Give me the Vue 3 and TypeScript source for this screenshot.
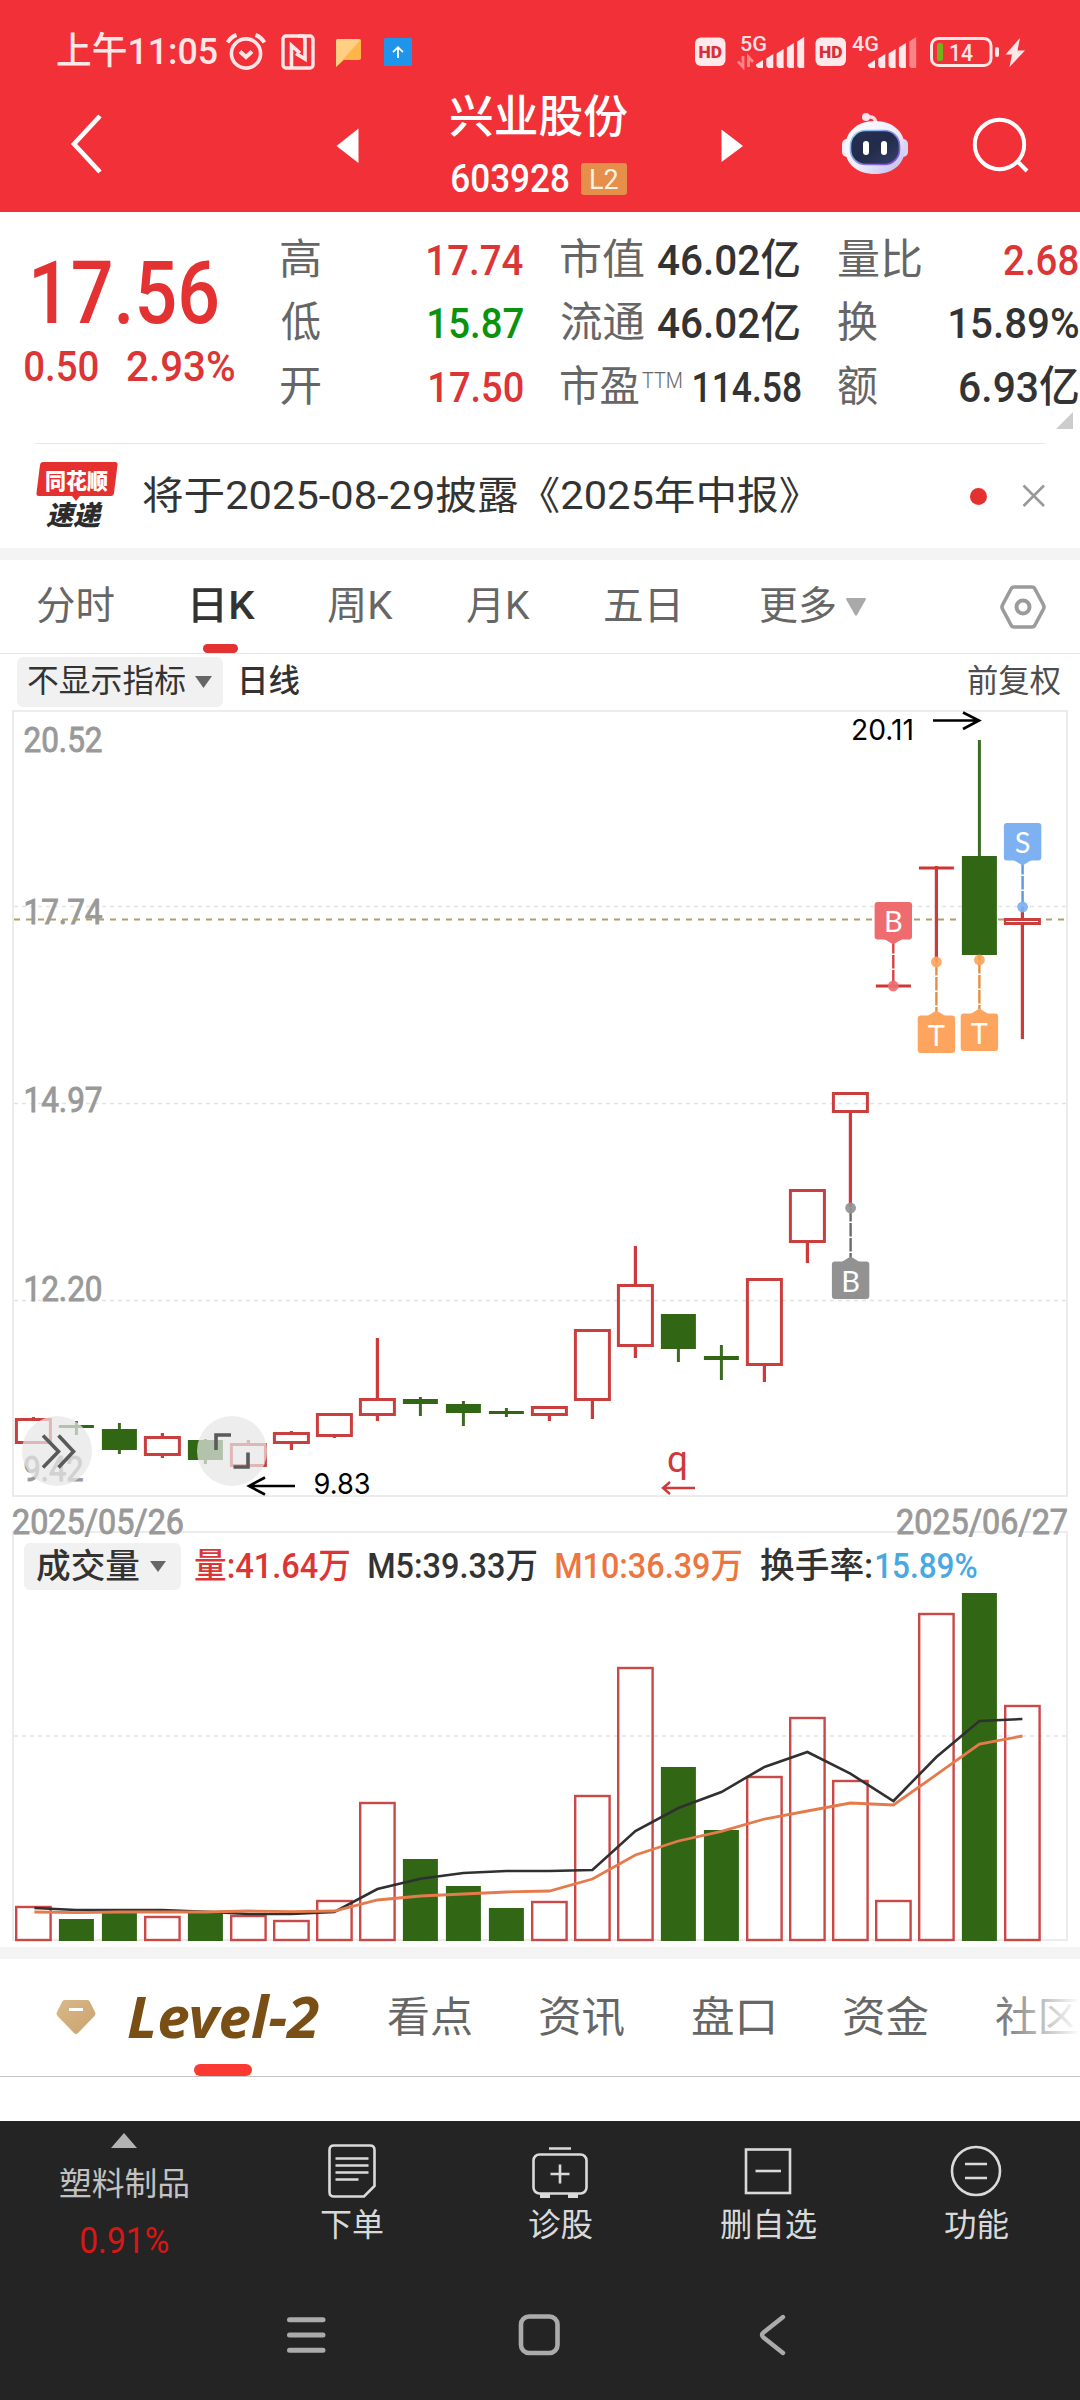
<script setup lang="ts">
import type { Directive } from 'vue'

/* Condenses or widens a line of text so that its visible ink spans the given width. */
const vFit: Directive<HTMLElement, number> = {
  mounted(el, { value }) {
    const cs = getComputedStyle(el)
    const ctx = document.createElement('canvas').getContext('2d')
    if (!ctx) return
    ctx.font = `${cs.fontStyle} ${cs.fontWeight} ${cs.fontSize} ${cs.fontFamily}`
    const m = ctx.measureText((el.textContent ?? '').trim())
    const ink = m.actualBoundingBoxRight + m.actualBoundingBoxLeft
    const s = value / ink
    el.style.width = `${value}px`
    el.style.transform = `translateX(${m.actualBoundingBoxLeft * s}px) scaleX(${s})`
  },
}

interface Candle {
  up: boolean
  top: number
  bottom: number
  high: number
  low: number
  vol: number
  m5: number
  m10: number
}

const raw: [number, number, number, number, number, number, number, number][] = [
  [1, 1418, 1444, 1417, 1444, 1906, 1908, 1912],
  [0, 1425, 1428, 1421, 1435, 1919, 1910, 1912.7],
  [0, 1429, 1450, 1423, 1454, 1913, 1910, 1912],
  [1, 1436, 1456, 1433, 1458, 1916, 1910, 1912],
  [0, 1440, 1460, 1439, 1464, 1913, 1911.7, 1912],
  [1, 1443, 1467, 1440, 1467, 1915, 1914, 1911],
  [1, 1432, 1444, 1431, 1450, 1920, 1914, 1911.7],
  [1, 1413, 1437, 1413, 1438, 1900, 1912, 1911],
  [1, 1398, 1416, 1338, 1421, 1802, 1889, 1900],
  [0, 1399, 1404, 1397, 1416, 1859, 1878.7, 1896],
  [0, 1404, 1413, 1401, 1426, 1886, 1873, 1894],
  [0, 1411, 1414, 1408, 1417, 1908, 1871, 1892],
  [1, 1406, 1416, 1406, 1421, 1901, 1871, 1891],
  [1, 1329, 1401, 1329, 1419, 1795, 1870, 1879],
  [1, 1284, 1347, 1246, 1358, 1667, 1831, 1855],
  [0, 1314, 1349, 1314, 1362, 1767, 1808, 1841],
  [0, 1356, 1360, 1345, 1380, 1830, 1792, 1831.3],
  [1, 1278, 1366, 1278, 1382, 1776, 1767, 1819],
  [1, 1189, 1243, 1189, 1263, 1717, 1752, 1811],
  [1, 1092, 1113, 1092, 1207, 1780, 1773.7, 1803],
  [1, 984, 988, 984, 988, 1900, 1801, 1805],
  [1, 866, 870, 866, 962, 1613, 1757, 1774.7],
  [0, 856, 955, 740, 960, 1593, 1721, 1744],
  [1, 918, 925, 907, 1039, 1705, 1719, 1736],
]
const candles: Candle[] = raw.map(([u, top, bottom, high, low, vol, m5, m10]) => ({
  up: u === 1, top, bottom, high, low, vol, m5, m10,
}))
const cx = (i: number) => 33.4 + i * 43
const line = (key: 'm5' | 'm10') => candles.map((c, i) => `${cx(i) + (i === 0 ? 1 : 0)},${c[key]}`).join(' ')

const marks = [
  { x: 893.3, dot: 986, box: 902, below: false, label: 'B', color: '#ee6c6d', stem: '#d84242' },
  { x: 936.4, dot: 962, box: 1015.5, below: true, label: 'T', color: '#fda55e', stem: '#e58f3e' },
  { x: 979.4, dot: 960, box: 1013.5, below: true, label: 'T', color: '#fda55e', stem: '#e58f3e' },
  { x: 1022.6, dot: 907, box: 823, below: false, label: 'S', color: '#7db1f1', stem: '#5b96de' },
  { x: 850.6, dot: 1208, box: 1261.5, below: true, label: 'B', color: '#929292', stem: '#6b6b6b' },
]
const axis = [
  { t: '20.52', y: 752, w: 79 },
  { t: '17.74', y: 924, w: 79 },
  { t: '14.97', y: 1112, w: 79 },
  { t: '12.20', y: 1301, w: 79 },
  { t: '9.42', y: 1481, w: 60 },
]
const signal = [60, 54, 49, 43, 37]
</script>

<template>
  <div class="screen">
    <header class="head">
      <div class="status">
        <span v-fit="160" class="clock">上午11:05</span>
        <svg class="i-alarm" width="40" height="38" viewBox="0 0 40 38" fill="none" stroke="#ffe6e7" stroke-width="3.6">
          <circle cx="20" cy="20.500" r="14.600" />
          <path d="M1.500 9.500Q5 4 10.500 2M38.500 9.500Q35 4 29.500 2" stroke-width="4" />
          <path d="M14 18.500L20 24L26 18.500" stroke-width="4" />
        </svg>
        <svg class="i-nfc" width="34" height="36" viewBox="0 0 34 36" fill="none" stroke="#ffe6e7" stroke-width="3.4">
          <rect x="2" y="2" width="30" height="32" rx="3" />
          <path d="M10.500 33V11.500L19 19M17 2H21Q24 2 24 6V25L15 19.500" stroke-width="3.600" />
        </svg>
        <svg class="i-msg" width="26" height="30" viewBox="0 0 26 30">
          <path d="M2 1H23Q25 1 25 3V20Q25 22 23 22H8L0 29V3Q0 1 2 1Z" fill="#ffb548" />
          <path d="M2 1H23L24.500 2L0 29V3Q0 1 2 1Z" fill="#ffcf84" />
        </svg>
        <svg class="i-up" width="28" height="28" viewBox="0 0 28 28">
          <rect width="28" height="28" rx="1.500" fill="#1e95ea" />
          <path d="M14 20V9.500M9 14.200L14 9.200L19 14.200" fill="none" stroke="#fff" stroke-width="1.800" />
        </svg>
        <svg class="sys" width="334" height="54" viewBox="692 20 334 54">
          <g v-for="x in [695, 815.5]" :key="x">
            <rect :x="x" y="37.500" width="30.500" height="28.500" rx="6" fill="#ffe9ea" />
            <text :x="x + 3.500" y="57.500" class="hd" textLength="23.500" lengthAdjust="spacingAndGlyphs">HD</text>
          </g>
          <text x="740" y="50.500" class="net" textLength="27" lengthAdjust="spacingAndGlyphs">5G</text>
          <text x="852" y="50.500" class="net" textLength="27" lengthAdjust="spacingAndGlyphs">4G</text>
          <path d="M743 56V67L738 61.500M748.500 67V57L753 62" fill="none" stroke="#f98589" stroke-width="2.800" />
          <path v-for="(y, i) in signal" :key="'a' + i" :d="`M${756 + i * 10.300} 66V${y + 4.500}L${763 + i * 10.300} ${y}V68H${758 + i * 10.300}Z`" fill="#ffe9ea" />
          <path v-for="(y, i) in signal" :key="'b' + i" :d="`M${868 + i * 10.300} 66V${y + 4.500}L${875 + i * 10.300} ${y}V68H${870 + i * 10.300}Z`" :fill="i === 4 ? '#f98488' : '#ffe9ea'" />
          <rect x="931.500" y="38.500" width="59.500" height="27" rx="7" fill="none" stroke="#ffe6e7" stroke-width="3" />
          <rect x="937" y="43" width="6" height="18" rx="2" fill="#74b21d" />
          <text x="949" y="61" class="bat" textLength="24" lengthAdjust="spacingAndGlyphs">14</text>
          <rect x="995" y="47" width="4" height="10" rx="2" fill="#ffe6e7" />
          <path d="M1020 38L1005.500 54.500H1012L1009.500 67L1025 50.500H1017.500Z" fill="#ffe6e7" />
        </svg>
      </div>
      <div class="title">
        <svg class="i-back" width="34" height="62" viewBox="0 0 34 62"><path d="M31 3L5 31L31 59" fill="none" stroke="#fff" stroke-width="4.600" /></svg>
        <svg class="i-prev" width="23" height="36" viewBox="0 0 23 36"><path d="M22.500 0.500V35L0.500 18Z" fill="#fff" /></svg>
        <div class="name">
          <b v-fit="178">兴业股份</b>
          <div class="code">
            <span v-fit="117" class="num">603928</span>
            <em><span v-fit="27">L2</span></em>
          </div>
        </div>
        <svg class="i-next" width="23" height="34" viewBox="0 0 23 34"><path d="M0.500 0.500V33L22 17Z" fill="#fff" /></svg>
        <svg class="i-bot" width="68" height="64" viewBox="841 112 68 64">
          <defs>
            <linearGradient id="shell" x1="0" y1="0" x2="1" y2="1">
              <stop offset="0" stop-color="#fff" /><stop offset=".55" stop-color="#f0ecfb" /><stop offset="1" stop-color="#b8b5ea" />
            </linearGradient>
            <linearGradient id="visor" x1="0" y1="0" x2="1" y2="1">
              <stop offset="0" stop-color="#272f55" /><stop offset=".5" stop-color="#222b49" /><stop offset="1" stop-color="#37406a" />
            </linearGradient>
            <linearGradient id="rim" x1="0" y1="0" x2="1" y2="1">
              <stop offset="0" stop-color="#8ed9ec" /><stop offset="1" stop-color="#7a41dc" />
            </linearGradient>
          </defs>
          <path d="M867 117.500Q875.500 115 876 124" fill="none" stroke="#f6dbea" stroke-width="3.400" />
          <circle cx="866" cy="117" r="4" fill="#fbe3ee" />
          <rect x="842" y="139" width="12" height="18" rx="5" fill="#efeafd" />
          <rect x="896" y="139" width="12" height="18" rx="5" fill="#d8d4f8" />
          <path d="M875 121C894 121 905 133 905 148C905 164 893 174 875 174C857 174 845 164 845 148C845 133 856 121 875 121Z" fill="url(#shell)" />
          <rect x="850.500" y="130.500" width="49" height="34" rx="15" fill="url(#visor)" stroke="url(#rim)" stroke-width="1.600" />
          <rect x="863" y="141" width="6" height="14" rx="3" fill="#fff" /><rect x="881" y="141" width="6" height="14" rx="3" fill="#fff" />
        </svg>
        <svg class="i-search" width="58" height="58" viewBox="971 116 58 58" fill="none" stroke="#fff" stroke-width="4">
          <circle cx="999.500" cy="144.500" r="24.700" /><path d="M1016.500 160.500L1027 171" />
        </svg>
      </div>
    </header>

    <section class="quote">
      <div class="last">
        <strong v-fit="183" class="num">17.56</strong>
        <div class="chg"><span v-fit="73" class="num">0.50</span><span v-fit="107" class="num">2.93%</span></div>
      </div>
      <div class="col c1">
        <div><label v-fit="39">高</label><span v-fit="95" class="num red">17.74</span></div>
        <div><label v-fit="39">低</label><span v-fit="94" class="num green">15.87</span></div>
        <div><label v-fit="39">开</label><span v-fit="93" class="num red">17.50</span></div>
      </div>
      <div class="col c2">
        <div><label v-fit="83">市值</label><span v-fit="141" class="num">46.02亿</span></div>
        <div><label v-fit="83">流通</label><span v-fit="141" class="num">46.02亿</span></div>
        <div class="pe"><label v-fit="78">市盈</label><sup v-fit="40">TTM</sup><span v-fit="107" class="num">114.58</span></div>
      </div>
      <div class="col c3">
        <div><label v-fit="83">量比</label><span v-fit="74" class="num red">2.68</span></div>
        <div><label v-fit="39">换</label><span v-fit="128" class="num">15.89%</span></div>
        <div><label v-fit="39">额</label><span v-fit="118" class="num">6.93亿</span></div>
      </div>
      <i class="more-corner"></i>
    </section>

    <section class="notice">
      <div class="flag">
        <svg class="flag-bg" width="82" height="68" viewBox="0 0 82 68"><path d="M7 0H79Q82 0 81.500 3L78 31Q77.500 34 75 34H44L40 39L36 34H3Q0 34 0.500 31L4 3Q4.500 0 7 0Z" fill="#e62f2f" /></svg>
        <span v-fit="62" class="f1">同花顺</span>
        <span v-fit="57" class="f2">速递</span>
      </div>
      <span v-fit="656" class="msg">将于2025-08-29披露《2025年中报》</span>
      <i class="dot"></i>
      <svg width="24" height="24" viewBox="0 0 24 24"><path d="M1.500 1.500L22 22M22 1.500L1.500 22" stroke="#999" stroke-width="2.600" /></svg>
    </section>

    <nav class="tabs">
      <span v-fit="77">分时</span>
      <span v-fit="62" class="on t2">日K</span>
      <span v-fit="65" class="t3">周K</span>
      <span v-fit="63" class="t4">月K</span>
      <span v-fit="73" class="t5">五日</span>
      <span v-fit="75" class="t6">更多</span>
      <svg class="tri" width="20" height="18" viewBox="0 0 20 18"><path d="M1 0H19Q20.500 0 19.500 2L11 17Q10 18.500 9 17L0.500 2Q-0.500 0 1 0Z" fill="#a9a9a9" /></svg>
      <svg class="gear" width="46" height="44" viewBox="0 0 46 44" fill="none" stroke="#9b9b9b">
        <path d="M14 2H32Q34 2 35 4L43.500 20Q44.500 22 43.500 24L35 40Q34 42 32 42H14Q12 42 11 40L2.500 24Q1.500 22 2.500 20L11 4Q12 2 14 2Z" stroke-width="3.600" />
        <circle cx="23" cy="22" r="6.500" stroke-width="4" />
      </svg>
      <i class="bar"></i>
    </nav>

    <div class="indicator">
      <div class="chip">
        <span v-fit="157">不显示指标</span>
        <svg width="17" height="12" viewBox="0 0 17 12"><path d="M0 0H17L8.500 12Z" fill="#666" /></svg>
      </div>
      <b v-fit="57">日线</b>
      <span v-fit="92" class="fq">前复权</span>
    </div>

    <section class="chart">
      <svg class="plot" width="1080" height="1237" viewBox="0 710 1080 1237">
        <g fill="none" stroke="#ececec" stroke-width="2">
          <rect x="13" y="711" width="1054" height="785" />
          <rect x="13" y="1532" width="1054" height="408" />
        </g>
        <g stroke="#e3e3e3" stroke-width="1.300" stroke-dasharray="4 4">
          <path d="M14 906.500H1066M14 1103.500H1066M14 1300.500H1066" /><path d="M14 1736H1066" />
        </g>
        <text v-for="a in axis" :key="a.t" x="23.500" :y="a.y" class="axis" :textLength="a.w" lengthAdjust="spacingAndGlyphs">{{ a.t }}</text>
        <path d="M14 919.500H1066" stroke="#b0a06c" stroke-width="1.800" stroke-dasharray="6 6" />

        <g v-for="(c, i) in candles" :key="i">
          <template v-if="c.up">
            <path :d="`M${cx(i)} ${c.high}V${c.top + 1}M${cx(i)} ${c.bottom - 1}V${c.low}`" stroke="#cf3939" stroke-width="3.2" />
            <rect v-if="c.bottom - c.top > 4" :x="cx(i) - 17" :y="c.top + 1.500" width="34" :height="c.bottom - c.top - 3" fill="none" stroke="#cb3e3e" stroke-width="3" />
            <rect v-else :x="cx(i) - 17.500" :y="c.top + 0.500" width="35" height="3" fill="#cf3535" />
            <rect :x="cx(i) - 17.200" :y="c.vol + 1" width="34.400" :height="1941 - c.vol - 2" fill="none" stroke="#cb4848" stroke-width="2.400" />
          </template>
          <template v-else>
            <path :d="`M${cx(i)} ${c.high}V${c.low}`" stroke="#3b6b22" stroke-width="3" />
            <rect :x="cx(i) - 17.500" :y="c.top" width="35" :height="c.bottom - c.top" fill="#316714" />
            <rect :x="cx(i) - 17.500" :y="c.vol" width="35" :height="1941 - c.vol" fill="#316714" />
          </template>
        </g>
        <polyline :points="line('m5')" fill="none" stroke="#303030" stroke-width="2.600" />
        <polyline :points="line('m10')" fill="none" stroke="#e57b4c" stroke-width="2.800" />

        <g v-for="(m, i) in marks" :key="'m' + i">
          <path :d="m.below ? `M${m.x} ${m.dot}V${m.box}` : `M${m.x} ${m.box + 38}V${m.dot}`" :stroke="m.stem" stroke-width="2.400" stroke-dasharray="13.500 1.500" />
          <circle :cx="m.x" :cy="m.dot" r="5.400" :fill="m.color" fill-opacity=".92" />
          <path :d="m.below ? `M${m.x - 9} ${m.box + 0.500}L${m.x} ${m.box - 5}L${m.x + 9} ${m.box + 0.500}Z` : `M${m.x - 9} ${m.box + 37}L${m.x} ${m.box + 42.500}L${m.x + 9} ${m.box + 37}Z`" :fill="m.color" />
          <rect :x="m.x - 18.700" :y="m.box" width="37.400" height="37.500" rx="3" :fill="m.color" />
          <text :x="m.x" :y="m.box + 30" class="mk">{{ m.label }}</text>
        </g>

        <text x="851" y="740" class="ext" textLength="63" lengthAdjust="spacingAndGlyphs">20.11</text>
        <path d="M933 720.500H979M963 712.500L979 720.500L963 729" fill="none" stroke="#000" stroke-width="2.600" />
        <text x="313.500" y="1494" class="ext" textLength="57" lengthAdjust="spacingAndGlyphs">9.83</text>
        <path d="M295 1486H249M265 1477.500L249 1486L265 1494.500" fill="none" stroke="#000" stroke-width="2.600" />
        <text x="677.500" y="1472" class="q">q</text>
        <path d="M695 1488H663M670 1482L663 1488L670 1494" fill="none" stroke="#cf3939" stroke-width="2.400" />

        <g fill="#e6e6e6" fill-opacity=".72"><circle cx="57" cy="1451" r="35" /><circle cx="232" cy="1451" r="35" /></g>
        <g fill="none" stroke="#5a5a5a" stroke-width="3.600">
          <path d="M43 1435.500L58.500 1451.500L43 1467.500M58.500 1435.500L73.500 1451.500L58.500 1467.500" />
          <path d="M216 1450V1435H231M248 1452.500V1467H233.500" />
        </g>

        <text x="12" y="1534" class="axis" textLength="172" lengthAdjust="spacingAndGlyphs">2025/05/26</text>
        <text x="896" y="1534" class="axis" textLength="172" lengthAdjust="spacingAndGlyphs">2025/06/27</text>
      </svg>
      <div class="legend">
        <div class="chip">
          <span v-fit="102">成交量</span>
          <svg width="16" height="11" viewBox="0 0 16 11"><path d="M0 0H16L8 11Z" fill="#666" /></svg>
        </div>
        <span v-fit="154" class="l1">量:41.64万</span>
        <span v-fit="167" class="l2">M5:39.33万</span>
        <span v-fit="185" class="l3">M10:36.39万</span>
        <span v-fit="110" class="l4">换手率:</span>
        <span v-fit="101" class="l5">15.89%</span>
      </div>
    </section>

    <nav class="sub">
      <svg class="gem" width="40" height="36" viewBox="0 0 40 36">
        <defs><linearGradient id="gold" x1="0" y1="0" x2="1" y2="1"><stop offset="0" stop-color="#dab88b" /><stop offset="1" stop-color="#c8a36b" /></linearGradient></defs>
        <path d="M9 0H31Q33 0 34 2L39 12Q40 14 38.500 16L22 33Q20 35 18 33L1.500 16Q0 14 1 12L6 2Q7 0 9 0Z" fill="url(#gold)" />
        <rect x="13" y="8" width="14" height="3" fill="#fff" />
      </svg>
      <strong v-fit="191">Level-2</strong>
      <span v-fit="83" class="s1">看点</span>
      <span v-fit="84" class="s2">资讯</span>
      <span v-fit="81" class="s3">盘口</span>
      <span v-fit="84" class="s4">资金</span>
      <span v-fit="82" class="s5">社区</span>
      <i class="fade"></i>
      <i class="bar"></i>
    </nav>

    <footer class="dock">
      <div class="acts">
        <div class="sector">
          <svg width="26" height="15" viewBox="0 0 26 15"><path d="M13 0L26 15H0Z" fill="#b3b3b3" /></svg>
          <span v-fit="128">塑料制品</span>
          <em v-fit="87">0.91%</em>
        </div>
        <div class="act a1">
          <svg width="58" height="58" viewBox="323 2142 58 58" fill="none" stroke="#dadada" stroke-width="2.600">
            <path d="M334 2145.500H370Q374.500 2145.500 374.500 2150V2186L364 2196.500H334Q329.500 2196.500 329.500 2192V2150Q329.500 2145.500 334 2145.500Z" />
            <path d="M335.500 2158.500H368.500M335.500 2165.500H368.500M335.500 2172.500H368.500M335.500 2179.500H358.500" />
          </svg>
          <span v-fit="62">下单</span>
        </div>
        <div class="act a2">
          <svg width="58" height="58" viewBox="531 2142 58 58" fill="none" stroke="#dadada" stroke-width="2.600">
            <rect x="533.500" y="2154.500" width="53" height="39" rx="6" />
            <path d="M549 2148.500H571M560 2164.500V2183.500M550.500 2174H569.500" /><path d="M540 2196H550M568 2196H578" stroke-width="4" />
          </svg>
          <span v-fit="63">诊股</span>
        </div>
        <div class="act a3">
          <svg width="58" height="58" viewBox="739 2142 58 58" fill="none" stroke="#dadada" stroke-width="2.600">
            <rect x="746" y="2149.500" width="44" height="43.500" /><path d="M755.500 2171H781" />
          </svg>
          <span v-fit="95">删自选</span>
        </div>
        <div class="act a4">
          <svg width="58" height="58" viewBox="947 2142 58 58" fill="none" stroke="#dadada" stroke-width="2.600">
            <circle cx="976" cy="2171" r="24" /><path d="M965 2164H987M965 2178H987" />
          </svg>
          <span v-fit="63">功能</span>
        </div>
      </div>
      <div class="keys">
        <svg class="k1" width="40" height="44" viewBox="286 2313 40 44" stroke="#ababab" stroke-width="5" stroke-linecap="round"><path d="M289.500 2319.700H323M289.500 2335H323M289.500 2350.300H323" /></svg>
        <svg class="k2" width="44" height="44" viewBox="517 2313 44 44" fill="none" stroke="#ababab" stroke-width="4.600"><rect x="521" y="2316.500" width="36.500" height="36.500" rx="8" /></svg>
        <svg class="k3" width="28" height="44" viewBox="759 2313 28 44" fill="none" stroke="#ababab" stroke-width="4.400" stroke-linecap="round"><path d="M783 2317L763.500 2332.500Q760.500 2335 763.500 2337.500L783 2353" /></svg>
      </div>
    </footer>
  </div>
</template>

<style>
body {
  margin: 0;
  background: #fff;
}
</style>

<style scoped>
.screen {
  width: 1080px;
  height: 2400px;
  overflow: hidden;
  background: #fff;
  color: #333;
  font-family: Roboto, 'Noto Sans CJK SC', sans-serif;
  display: flex;
  flex-direction: column;
}
svg { display: block; flex: none; }
span, b, strong, label, em, sup {
  display: block;
  flex: none;
  white-space: nowrap;
  transform-origin: 0 50%;
  font-style: normal;
}
.num { font-family: Roboto, 'Noto Sans CJK SC', sans-serif; font-weight: 500; }
.red { color: #dc3535; }
.green { color: #0a930d; }

.head { height: 212px; flex: none; background: #f13038; color: #fff; }
.status { height: 78px; display: flex; padding-left: 57px; }
.clock { font-size: 37px; line-height: 52px; margin-top: 26px; color: #ffe6e7; font-weight: 500; }
.i-alarm { margin: 33px 0 0 9px; }
.i-nfc { margin: 34px 0 0 15px; }
.i-msg { margin: 38px 0 0 21px; }
.i-up { margin: 38px 0 0 22px; }
.sys { margin: 20px 0 0 280px; }
.hd { font: 900 17px Roboto, sans-serif; fill: #d92f36; }
.net { font: 500 21px Roboto, sans-serif; fill: #ffdfe0; }
.bat { font: 500 24px Roboto, sans-serif; fill: #ffe6e7; }
.title { height: 134px; display: flex; }
.i-back { margin: 34.500px 0 0 69px; }
.i-prev { margin: 49.500px 0 0 233px; }
.name { margin: 17px 0 0 91px; width: 180px; }
.name b { font-size: 45px; line-height: 44px; font-weight: 500; margin-top: 1px; }
.code { display: flex; margin: 23px 0 0 2px; align-items: center; height: 32px; }
.code .num { font-size: 39px; line-height: 32px; }
.code em { width: 46px; height: 32px; margin-left: 12px; border-radius: 3px; background: #e58f4b; }
.code em span { margin-left: 10px; font-size: 28px; line-height: 33px; color: #fff3e2; }
.i-next { margin: 50.500px 0 0 91px; }
.i-bot { margin: 34px 0 0 97px; }
.i-search { margin: 38px 0 0 62px; }

.quote { height: 232px; flex: none; display: flex; position: relative; box-sizing: border-box; }
.quote::after { content: ''; position: absolute; left: 35px; width: 1010px; bottom: 0; height: 1px; background: #e6e6e6; }
.last { width: 281px; }
.last strong { margin: 36px 0 0 34px; font-size: 87px; line-height: 90px; color: #e43232; }
.chg { display: flex; gap: 29px; margin: 10px 0 0 25px; color: #dc3535; }
.chg .num { font-size: 43px; line-height: 36px; }
.col { padding-top: 16.500px; }
.col div { display: flex; justify-content: space-between; height: 63.500px; line-height: 63.500px; font-size: 43px; }
.col label { color: #666; font-size: 42px; font-weight: 400; line-height: 62px; }
.c1 { width: 242px; }
.c2 { width: 238px; margin-left: 38px; }
.c3 { width: 240px; margin-left: 39px; }
.c2 .pe { width: 240px; }
.pe sup { font-size: 22px; line-height: 49px; margin: 0 12px 0 3px; color: #666; font-weight: 300; }
.more-corner { position: absolute; left: 1056px; top: 200px; border-left: 17px solid transparent; border-bottom: 17px solid #ccc; }

.notice { height: 104px; flex: none; display: flex; align-items: center; padding-left: 36px; border-bottom: 12px solid #f4f4f4; }
.flag { position: relative; width: 82px; height: 68px; margin-top: 0; }
.flag-bg { position: absolute; left: 0; top: 0; }
.flag span { font-weight: 900; position: relative; font-family: 'Noto Sans CJK SC', sans-serif; }
.f1 { font-size: 22px; line-height: 34px; margin-left: 10px; color: #fff; }
.f2 { font-size: 27px; line-height: 36px; margin-left: 10px; color: #2c2c2c; font-style: italic; }
.msg { margin-left: 25px; font-size: 39px; color: #333; line-height: 60px; margin-top: -1px; }
.dot { width: 17px; height: 17px; border-radius: 50%; background: #e53030; margin: 0 35px 0 171px; }

.tabs { height: 93px; flex: none; display: flex; padding-left: 37px; border-bottom: 1px solid #e4e4e4; position: relative; font-size: 39px; line-height: 93px; color: #666; }
.tabs .on { color: #333; font-weight: 500; }
.t2 { margin-left: 79px; }
.t3 { margin-left: 73px; }
.t4 { margin-left: 74px; }
.t5 { margin-left: 75px; }
.t6 { margin-left: 82px; }
.tri { margin: 38px 0 0 11px; }
.gear { margin: 25px 0 0 134px; }
.tabs .bar { position: absolute; left: 203px; bottom: 0; width: 35px; height: 9px; border-radius: 5px; background: #e43131; }

.indicator { height: 56px; flex: none; display: flex; align-items: center; padding-left: 17px; font-size: 32px; line-height: 46px; }
.chip { display: flex; align-items: center; background: #f1f1f1; border-radius: 6px; }
.indicator .chip { width: 206px; height: 50px; }
.indicator .chip span { margin: -2px 10px 0 11px; }
.indicator b { font-weight: 500; margin: -2px 0 0 19px; }
.fq { margin: -2px 0 0 669px; color: #4d4d4d; }

.chart { height: 1237px; flex: none; position: relative; }
.plot { position: absolute; left: 0; top: 0; }
.axis { font: 400 34.500px Roboto, sans-serif; fill: #999; stroke: #999; stroke-width: 0.900px; }
.ext { font: 400 29px Inter, sans-serif; fill: #000; }
.mk { font: 400 29px Lato, sans-serif; fill: #fff; text-anchor: middle; }
.q { font: 400 37px Roboto, sans-serif; fill: #cf3939; text-anchor: middle; }
.legend { position: relative; padding: 833px 0 0 24px; display: flex; align-items: center; height: 47px; font-size: 35px; line-height: 46px; font-weight: 500; }
.legend > span { margin-top: 1px; }
.legend .chip { width: 157px; height: 47px; }
.legend .chip span { margin: -1px 11px 0 13px; font-size: 34px; font-weight: 500; }
.legend .l1 { margin-left: 14px; color: #dc3535; }
.legend .l2 { margin-left: 20px; }
.legend .l3 { margin-left: 20px; color: #ec7640; }
.legend .l4 { margin-left: 20px; }
.legend .l5 { margin-left: 5px; color: #47a8e2; }

.sub { height: 117px; flex: none; display: flex; position: relative; border-top: 12px solid #f4f4f4; border-bottom: 1px solid #c4c4c4; font-size: 42px; line-height: 118px; color: #666; }
.gem { margin: 41px 0 0 56px; }
.sub strong { margin: 2px 0 0 32px; font: italic 700 57px/110px 'Noto Sans', sans-serif; color: #7a4f15; }
.s1 { margin-left: 69px; }
.s2 { margin-left: 69px; }
.s3 { margin-left: 68px; }
.s4 { margin-left: 71px; }
.s5 { margin-left: 68px; }
.fade { position: absolute; right: 0; top: 0; width: 90px; height: 110px; background: linear-gradient(90deg, rgba(255, 255, 255, 0), #fff); }
.sub .bar { position: absolute; left: 194px; bottom: 0; width: 58px; height: 12px; border-radius: 6px; background: #fb3a32; }

.dock { margin-top: 44px; height: 279px; flex: none; background: #242424; color: #d9d9d9; }
.acts { display: flex; height: 170px; font-size: 32px; line-height: 40px; }
.sector { width: 128px; margin-left: 60px; display: flex; flex-direction: column; align-items: center; color: #c2c2c2; }
.sector svg { margin-top: 12px; }
.sector span { margin-top: 16px; }
.sector em { margin-top: 17px; font-size: 36px; color: #d91616; }
.act { width: 100px; display: flex; flex-direction: column; align-items: center; padding-top: 21px; }
.act span { margin-top: 5px; }
.a1 { margin-left: 114px; }
.a2 { margin-left: 108px; }
.a3 { margin-left: 108px; }
.a4 { margin-left: 108px; }
.keys { display: flex; padding-top: 22px; }
.k1 { margin-left: 286px; }
.k2 { margin-left: 191px; }
.k3 { margin-left: 198px; }
</style>
